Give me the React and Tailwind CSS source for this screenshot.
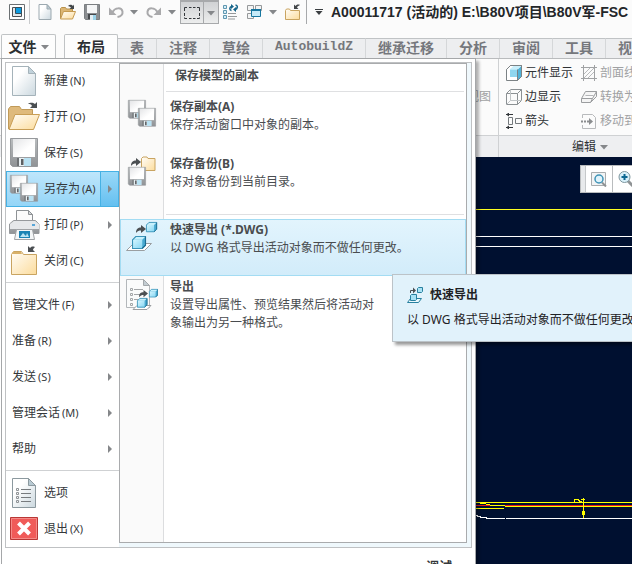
import React, { useState } from "react";

/* ---------- Small drawings ---------- */

const Gradients = () => (
  <svg width="0" height="0" className="absolute" aria-hidden="true">
    <defs>
      <linearGradient id="paper" x1="0" y1="0" x2="1" y2="1">
        <stop offset="0.3" stopColor="#ffffff" />
        <stop offset="1" stopColor="#cbd8df" />
      </linearGradient>
      <linearGradient id="folder" x1="0" y1="0" x2="1" y2="1">
        <stop offset="0.1" stopColor="#fffaf0" />
        <stop offset="1" stopColor="#fcdc9c" />
      </linearGradient>
      <linearGradient id="metal" x1="0" y1="0" x2="0" y2="1">
        <stop offset="0" stopColor="#b9bcbe" />
        <stop offset="1" stopColor="#909396" />
      </linearGradient>
      <linearGradient id="label" x1="0" y1="0" x2="1" y2="1">
        <stop offset="0" stopColor="#e4e5e7" />
        <stop offset="0.6" stopColor="#ffffff" />
      </linearGradient>
      <linearGradient id="cube" x1="0" y1="0" x2="1" y2="1">
        <stop offset="0" stopColor="#d6f6ff" />
        <stop offset="1" stopColor="#86d6f3" />
      </linearGradient>
    </defs>
  </svg>
);

const Icon = ({ size = 16, children }) => (
  <svg
    width={size}
    height={size}
    viewBox={`0 0 ${size} ${size}`}
    fill="none"
    className="shrink-0"
    aria-hidden="true"
  >
    {children}
  </svg>
);

const Floppy = () => (
  <>
    <path d="M0.5 0.5h27v28h-25l-2-2z" fill="url(#metal)" stroke="#96999c" />
    <path d="M3 1h22v18H3z" fill="url(#label)" />
    <path d="M7 20h14v8H7z" fill="#6e7174" />
    <path d="M9 20h12v8H9z" fill="#e9f0f3" />
    <path d="M14 20h7v8h-7z" fill="#b9e2f3" />
    <path d="M11 21h2.500v6H11z" fill="#5c6063" />
  </>
);

const Cube = () => (
  <>
    <path d="M0.500 3.500l3-3h9v8l-3 3h-9z" fill="#48a9d0" />
    <path d="M0.500 3.500h9v8h-9z" fill="url(#cube)" />
    <path d="M0.500 3.500l3-3h9l-3 3z" fill="#c6f0fc" />
    <path d="M0.500 3.500l3-3h9v8l-3 3h-9z" stroke="#3a93b8" />
    <path d="M12.500 0.500v8l-3 3" stroke="#1a6d92" />
  </>
);

const CurvedArrow = () => (
  <path d="M0 8c0-4 2-5.500 5-5.500V0l5 4-5 4V5.500C3 5.500 1.500 6 0 8z" fill="#4b4f52" />
);

const NewIcon = () => (
  <Icon>
    <path d="M1 0.5h8l4 4.500v10.500H1z" fill="url(#paper)" stroke="#9ca9b0" />
    <path d="M9 0.5v4.500h4z" fill="#bdccd4" stroke="#9ca9b0" />
  </Icon>
);

const OpenIcon = () => (
  <Icon>
    <path d="M0.500 14.500V4.500l1-1h4l1 1.500h6v3" fill="#dcb674" stroke="#b9924c" />
    <path d="M0.500 15l3-7.500h12l-3 7.500z" fill="url(#folder)" stroke="#c59a50" />
    <path d="M8 2c2-2 4-1 5 0l1-1.500V5h-4.500L11 3.500C10 2.500 9 2.500 8 2z" fill="#43474a" />
  </Icon>
);

const SaveIcon = () => (
  <Icon>
    <path d="M0.500 0.500h15v15h-14l-1-1z" fill="#8b8e91" stroke="#7a7e81" />
    <path d="M3 1h10v8H3z" fill="#f4f5f6" />
    <path d="M4 10h8v5H4z" fill="#45494c" />
    <path d="M6 11h6v5H6z" fill="#e3eef3" />
    <path d="M9 11h3v5H9z" fill="#9bd3ea" />
  </Icon>
);

const UndoIcon = () => (
  <Icon>
    <path d="M4.500 8C7 3.500 13.500 3 14.500 7.500c.5 3-1.500 5-5 5.500" stroke="#a9a9ab" strokeWidth="2" />
    <path d="M1 3.500V11h7.500z" fill="#a9a9ab" />
  </Icon>
);

const RedoIcon = () => (
  <Icon>
    <path d="M11.500 8C9 3.500 2.500 3 1.500 7.500c-.5 3 1.500 5 5 5.500" stroke="#a9a9ab" strokeWidth="2" />
    <path d="M15 3.500V11H7.500z" fill="#a9a9ab" />
  </Icon>
);

const AppIcon = () => (
  <Icon>
    <path d="M0.500 0.500h15v15H0.500z" fill="#fff" stroke="#6b7073" />
    <path d="M3.500 3.500h9v9h-9z" fill="#e3e7e9" stroke="#4c5155" />
    <path d="M6.500 3.500h6v6h-6z" fill="#0b9be0" stroke="#34505f" />
  </Icon>
);

const SelectIcon = () => (
  <Icon>
    <path
      d="M0.500 6V2.500H3M5 2.500h2.500M9 2.500h2.500M13 2.500h2.500V6M15.500 8v3M15.500 12.500v1H13M11.500 13.500H9M7.500 13.500H5M3 13.500H0.500v-1M0.500 11V8"
      stroke="#33373a"
    />
  </Icon>
);

const RegenIcon = () => (
  <Icon>
    <path d="M0.500 1.500h3v3h-3zM0.500 6.500h3v3h-3zM0.500 11.500h3v3h-3z" fill="#d7eef7" stroke="#5f97b0" />
    <path d="M5 9.500h8M5 12.500h9M5 15h7" stroke="#96999b" />
    <path d="M8.500 6.500C6 6 6.500 3 8.500 2.500" stroke="#15658a" strokeWidth="1.500" />
    <path d="M8 0l3 2.500L8 5z" fill="#15658a" />
    <path d="M12.500 1c3 .5 2 4-.5 4.500" stroke="#15658a" strokeWidth="1.500" />
    <path d="M13 3L10 5.500 13 8z" fill="#15658a" />
  </Icon>
);

const WindowsIcon = () => (
  <Icon>
    <path d="M0.500 1.500h6v5h-6zM8.500 1.500h6v5h-6zM0.500 9.500h6v5h-6z" fill="#f3f4f4" stroke="#96999b" />
    <path d="M4.500 5.500h9v7h-9z" fill="#c6eaf8" stroke="#17769f" />
    <path d="M4 5h10v2H4z" fill="#17769f" />
  </Icon>
);

const CloseFolderIcon = () => (
  <Icon>
    <path d="M0.500 15.500V6.500l1-1.500h3l1 1.500h9v9z" fill="url(#folder)" stroke="#c9a461" />
    <path d="M15 1c-2-1-4 0-4.500 1L9 0.500V5h4.500L12 3.500C12.500 2 14 2 15 1z" fill="#43474a" />
  </Icon>
);

const NewLarge = () => (
  <Icon size={32}>
    <path d="M4.500 1.500h16l7 7v22h-23z" fill="url(#paper)" stroke="#a5b3ba" />
    <path d="M20.500 1.500v7h7z" fill="#c1d2db" stroke="#a5b3ba" />
  </Icon>
);

const OpenLarge = () => (
  <Icon size={32}>
    <path d="M0.500 28V8l2-2.500h9l2 3h11V15" fill="#dfba7c" stroke="#c09a58" />
    <path d="M1 28.500L7 13.500h24.500l-6 15z" fill="url(#folder)" stroke="#c99e55" />
    <path d="M20 3c3-2 5-1 7 0l2-2v6h-7l2-2c-1-2-2-2-4-2z" fill="#4b4f52" />
  </Icon>
);

const SaveLarge = () => (
  <Icon size={32}>
    <g transform="translate(2 1)">
      <Floppy />
    </g>
  </Icon>
);

const SaveAsLarge = () => (
  <Icon size={32}>
    <g transform="translate(2 2) scale(0.640)">
      <Floppy />
    </g>
    <g transform="translate(12 10) scale(0.640)">
      <Floppy />
    </g>
  </Icon>
);

const PrintLarge = () => (
  <Icon size={32}>
    <path d="M8.500 13V1.500h12l4 4V13" fill="#fbfbfb" stroke="#8e9295" />
    <path d="M20.500 1.500v4h4z" fill="#d5d8da" stroke="#8e9295" />
    <path d="M1.500 24.500V15l4-3.500h22l3.500 3.500v9.500z" fill="url(#metal)" stroke="#96999c" />
    <path d="M2 15l4-3h21l4 3v5H2z" fill="#e6e8ea" />
    <path d="M24 15h3v2h-3z" fill="#58a6d8" />
    <path d="M8.500 20.500h16l2 10H6.500z" fill="#f4f6f7" stroke="#a0a3a6" />
    <path d="M11 22h11v7H11z" fill="#1b84b5" />
    <path d="M12 28l3-4 3 3 1-3 2 4z" fill="#b9e3f4" />
  </Icon>
);

const CloseLarge = () => (
  <Icon size={32}>
    <path d="M3.500 29.500V9.500l2-3h8l2 3h13v20z" fill="url(#folder)" stroke="#c9a461" />
    <path d="M5 7h8l1 2H4z" fill="#d9b169" />
    <path d="M27 2c-3-1-4 0-5 1l-2-2v6h7l-2-2c0-1 1-2 2-3z" fill="#4b4f52" />
  </Icon>
);

const OptionsLarge = () => (
  <Icon size={32}>
    <path d="M4.500 1.500h16l7 7v22h-23z" fill="url(#paper)" stroke="#8c999f" />
    <path d="M20.500 1.500v7h7z" fill="#b8cad3" stroke="#8c999f" />
    <path d="M13 12.500h10M13 16.500h10M13 20.500h10M13 24.500h10" stroke="#777b7e" />
    <path d="M8.500 11.500h2v2h-2zM8.500 15.500h2v2h-2zM8.500 19.500h2v2h-2zM8.500 23.500h2v2h-2z" stroke="#8f9396" />
  </Icon>
);

const ExitLarge = () => (
  <Icon size={32}>
    <path d="M2.500 4.500h27v22h-27z" fill="#f05b59" stroke="#b93735" />
    <path d="M3.500 5.500h25v20h-25z" stroke="#f58b88" />
    <path d="M10.500 10l11 11M21.500 10l-11 11" stroke="#fff" strokeWidth="4" />
  </Icon>
);

const BackupLarge = () => (
  <Icon size={32}>
    <path d="M15.500 15.500V3.500l1.500-1.500h4l1 1.500h7v12z" fill="url(#folder)" stroke="#c9a461" />
    <g transform="translate(5 3)">
      <CurvedArrow />
    </g>
    <g transform="translate(2 12) scale(0.640)">
      <Floppy />
    </g>
  </Icon>
);

const QuickExportLarge = () => (
  <Icon size={32}>
    <g transform="translate(10 4)">
      <CurvedArrow />
    </g>
    <g transform="translate(20 1) scale(0.850)">
      <Cube />
    </g>
    <path d="M0.500 29.500l7-7h18l-7 7z" fill="#fff" stroke="#9a9ea1" />
    <g transform="translate(6 15) scale(1.080)">
      <Cube />
    </g>
  </Icon>
);

const ExportLarge = () => (
  <Icon size={32}>
    <path d="M0.500 1.500h17l6 6v22h-23z" fill="#fafbfb" stroke="#b3b7ba" />
    <path d="M17.500 1.500v6h6z" fill="#c3cdd2" stroke="#a3a8ab" />
    <path d="M8 11.500h9M8 16.500h6M8 21.500h4" stroke="#a3a6a8" />
    <path d="M4.500 10.500h2v2h-2zM4.500 15.500h2v2h-2zM4.500 20.500h2v2h-2zM4.500 25.500h2v2h-2z" stroke="#a3a6a8" />
    <path d="M7 31.500l4-4h14l-4 4z" fill="#fff" stroke="#9a9ea1" />
    <g transform="translate(13 12) scale(0.900)">
      <CurvedArrow />
    </g>
    <g transform="translate(23 11) scale(0.700)">
      <Cube />
    </g>
    <g transform="translate(11 20) scale(0.800)">
      <Cube />
    </g>
  </Icon>
);

const QuickExportIcon = () => (
  <Icon>
    <path d="M3.500 6V3.500H7" stroke="#4b4f52" />
    <path d="M6 0.500l3 3-3 3z" fill="#4b4f52" />
    <path d="M0.500 15.500l3-4h11l-3 4z" fill="#eaf8fd" stroke="#28809f" />
    <path d="M10.500 1.500l1-1h4v4l-1 1h-4z" fill="#a9e2f5" stroke="#28809f" />
    <path d="M3.500 8.500l1-1h5v5l-1 1h-5z" fill="#a9e2f5" stroke="#28809f" />
  </Icon>
);

const ComponentIcon = () => (
  <Icon>
    <path d="M0.500 4.500l4-4h11v11l-4 4h-11z" fill="#fff" stroke="#7c8285" />
    <path d="M11.500 4.500l4-4v11l-4 4z" fill="#4fb2d8" />
    <path d="M3.500 4.500l4-3.500h8l-4 3.500z" fill="#c9effb" />
    <path d="M4 4.500h7.500v7.500H4z" fill="#8fd6ef" />
    <path d="M0.500 4.500l4-4h11v11l-4 4M11.500 4.500v11" stroke="#7c8285" />
  </Icon>
);

const EdgeIcon = () => (
  <Icon>
    <path d="M0.500 4.500l4-4h11v11l-4 4h-11zM0.500 4.500h11v11M11.500 4.500l4-4" stroke="#8b9093" />
    <path d="M4.500 0.500v11l-4 4M4.500 11.500h11" stroke="#c1c5c7" />
  </Icon>
);

const ArrowheadIcon = () => (
  <Icon>
    <path d="M0 1.500h7M0 14.500h7" stroke="#33373a" />
    <path d="M3 -0.500v4L0 1.500zM3 12.500v4l-3-2z" fill="#33373a" />
    <path d="M2.500 4.500h4v7h-4zM9.500 5.500h6v5h-6z" stroke="#74797c" />
  </Icon>
);

const HatchIcon = () => (
  <Icon>
    <path d="M2.500 0v16M13.500 0v16M0 2.500h16M0 13.500h16" stroke="#a0a2a4" />
    <path d="M3 9l6-6M3 13L13 3M7 13l6-6" stroke="#b8babc" />
  </Icon>
);

const ConvertIcon = () => (
  <Icon>
    <path d="M0.500 9.500l4-7h11l-4 7zM0.500 9.500v4h9l6-6v-5M11.500 9.500l-2 4" fill="#f4f4f4" stroke="#9b9d9f" />
    <path d="M4.500 6.500h8" stroke="#b3b5b7" />
  </Icon>
);

const MoveIcon = () => (
  <Icon>
    <path d="M1.500 5V1.500h10l3 3v11h-13V12" stroke="#b8babc" />
    <path d="M0 8.500h8" stroke="#8b8d8f" strokeWidth="2" strokeDasharray="2 1" />
    <path d="M8 5l4 3.500L8 12z" fill="#8b8d8f" />
  </Icon>
);

const ZoomWindowIcon = () => (
  <Icon>
    <path d="M0.500 1.500h14v13h-14z" fill="#f2f4f5" stroke="#a8acae" />
    <path d="M11 11.500l4 4" stroke="#8f9395" strokeWidth="2" />
    <circle cx="8" cy="8" r="4" fill="#e0f3fb" stroke="#3f93b6" strokeWidth="1.500" />
  </Icon>
);

const ZoomInIcon = () => (
  <Icon>
    <path d="M10 10l5 5" stroke="#8f9395" strokeWidth="3" />
    <circle cx="6.500" cy="6" r="5.500" fill="#d8f0fa" stroke="#7f979f" />
    <path d="M6.500 3v6M3.500 6h6" stroke="#0b6791" strokeWidth="2" />
  </Icon>
);

const DownCaret = ({ bar = false }) => (
  <svg width="8" height="6" viewBox="0 0 8 6" className="shrink-0" aria-hidden="true">
    {bar && <path d="M0 0h8v1H0z" fill="#3b3f42" />}
    <path d={bar ? "M0.500 2h7L4 6z" : "M0 1h8L4 5.500z"} fill={bar ? "#3b3f42" : "#85878a"} />
  </svg>
);

const RightCaret = () => (
  <svg width="4" height="8" viewBox="0 0 4 8" className="shrink-0" aria-hidden="true">
    <path d="M0 0l4 4-4 4z" fill="#85878a" />
  </svg>
);

/* ---------- Data ---------- */

const tabs = ["表", "注释", "草绘", "AutobuildZ", "继承迁移", "分析", "审阅", "工具", "视图"];

const fileActions = [
  { label: "新建", hotkey: "N", Glyph: NewLarge },
  { label: "打开", hotkey: "O", Glyph: OpenLarge },
  { label: "保存", hotkey: "S", Glyph: SaveLarge },
  { label: "另存为", hotkey: "A", Glyph: SaveAsLarge, submenu: true },
  { label: "打印", hotkey: "P", Glyph: PrintLarge, submenu: true },
  { label: "关闭", hotkey: "C", Glyph: CloseLarge },
];

const manageActions = [
  { label: "管理文件", hotkey: "F", submenu: true },
  { label: "准备", hotkey: "R", submenu: true },
  { label: "发送", hotkey: "S", submenu: true },
  { label: "管理会话", hotkey: "M", submenu: true },
  { label: "帮助", submenu: true },
];

const appActions = [
  { label: "选项", Glyph: OptionsLarge },
  { label: "退出", hotkey: "X", Glyph: ExitLarge },
];

const copyActions = [
  { title: "保存副本(A)", text: "保存活动窗口中对象的副本。", Glyph: SaveAsLarge },
  { title: "保存备份(B)", text: "将对象备份到当前目录。", Glyph: BackupLarge },
];

const exportActions = [
  {
    title: "快速导出 (*.DWG)",
    text: "以 DWG 格式导出活动对象而不做任何更改。",
    Glyph: QuickExportLarge,
    active: true,
  },
  {
    title: "导出",
    text: "设置导出属性、预览结果然后将活动对\n象输出为另一种格式。",
    Glyph: ExportLarge,
  },
];

/* ---------- Parts ---------- */

const ToolButton = ({ label, className = "", children }) => (
  <button type="button" aria-label={label} className={`shrink-0 ${className}`}>
    {children}
  </button>
);

const QuickAccess = () => (
  <header className="flex h-[34px] shrink-0 items-start whitespace-nowrap">
    <div className="flex h-6 items-center pl-[9px]">
      <ToolButton label="窗口"><AppIcon /></ToolButton>
      <div className="ml-1 h-full w-px bg-[#c9cbcd]" />
      <ToolButton label="新建" className="ml-2"><NewIcon /></ToolButton>
      <ToolButton label="打开" className="ml-1.5"><OpenIcon /></ToolButton>
      <ToolButton label="保存" className="ml-2"><SaveIcon /></ToolButton>
      <ToolButton label="撤消" className="ml-2"><UndoIcon /></ToolButton>
      <ToolButton label="撤消列表" className="ml-1.5"><DownCaret /></ToolButton>
      <ToolButton label="重做" className="ml-2"><RedoIcon /></ToolButton>
      <ToolButton label="重做列表" className="ml-1.5"><DownCaret /></ToolButton>
      <div className="ml-1 flex h-full border border-t-2 border-[#a7a9ab] bg-linear-to-b from-[#d0d2d4] to-[#eceded]">
        <ToolButton label="选择" className="border-r border-[#a7a9ab] px-[3px]"><SelectIcon /></ToolButton>
        <ToolButton label="选择列表" className="px-[3px]"><DownCaret /></ToolButton>
      </div>
      <ToolButton label="重新生成" className="ml-1"><RegenIcon /></ToolButton>
      <ToolButton label="切换窗口" className="ml-2"><WindowsIcon /></ToolButton>
      <ToolButton label="窗口列表" className="ml-1.5"><DownCaret /></ToolButton>
      <ToolButton label="关闭" className="ml-2"><CloseFolderIcon /></ToolButton>
      <div className="ml-[5px] h-full w-px bg-[#a7a9ab]" />
      <ToolButton label="自定义" className="ml-2"><DownCaret bar /></ToolButton>
      <h1 className="ml-2 text-sm font-bold text-[#232629]">
        A00011717 (活动的) E:\B80V项目\B80V军-FSC
      </h1>
    </div>
  </header>
);

const TabBar = () => (
  <nav className="flex h-6 shrink-0 items-end whitespace-nowrap pl-px text-sm font-bold">
    <button
      type="button"
      className="mr-2 flex h-6 w-[55px] shrink-0 items-center justify-center gap-1 rounded-t-xs border border-b-0 border-[#c0c3c5] bg-[#fdfdfd] text-[#2c2f32]"
    >
      文件
      <DownCaret />
    </button>
    <button
      type="button"
      className="flex h-6 shrink-0 items-center rounded-t-xs border border-b-0 border-[#c0c3c5] bg-[#fdfdfd] px-3 text-[#2c2f32]"
    >
      布局
    </button>
    {tabs.map((tab) => (
      <button
        key={tab}
        type="button"
        className={`flex h-5 shrink-0 items-center border-t border-r border-t-[#c0c3c5] border-r-[#d5d7d9] bg-[#edeef0] px-3 pb-0.5 text-[#75777c] ${
          tab === "AutobuildZ" ? "font-['Liberation_Mono',monospace] text-[13px]" : ""
        }`}
      >
        {tab}
      </button>
    ))}
    <div className="h-5 flex-1 border-t border-[#c0c3c5] bg-[#edeef0]" />
  </nav>
);

const Command = ({ Glyph, label, muted }) => (
  <button
    type="button"
    className={`flex h-6 items-center gap-[3px] ${muted ? "text-[#a0a1a3]" : "text-[#2f3235]"}`}
  >
    <Glyph />
    {label}
  </button>
);

const Ribbon = () => (
  <section className="flex h-[99px] shrink-0 border-t border-[#b9bbbd] text-xs whitespace-nowrap">
    <div className="flex w-[499px] shrink-0 flex-col border-r border-[#cfd1d3]">
      <button type="button" className="flex-1 pr-[7px] text-right text-[#a0a1a3]">
        视图
      </button>
      <div className="h-[22px] border-t border-[#cfd1d3] bg-[#eeeff1]" />
    </div>
    <div className="flex flex-1 flex-col">
      <div className="flex flex-1 gap-2 pt-0.5 pl-[7px]">
        <div className="flex flex-col">
          <Command Glyph={ComponentIcon} label="元件显示" />
          <Command Glyph={EdgeIcon} label="边显示" />
          <Command Glyph={ArrowheadIcon} label="箭头" />
        </div>
        <div className="flex flex-col">
          <Command Glyph={HatchIcon} label="剖面线" muted />
          <Command Glyph={ConvertIcon} label="转换为" muted />
          <Command Glyph={MoveIcon} label="移动到" muted />
        </div>
      </div>
      <button
        type="button"
        className="flex h-[22px] items-center gap-1 border-t border-[#cfd1d3] bg-[#eeeff1] pl-[73px] text-[#2f3235]"
      >
        编辑
        <DownCaret />
      </button>
    </div>
  </section>
);

const Canvas = () => (
  <main className="relative flex-1 overflow-hidden border-l border-white bg-[#001030]">
    <svg width="100%" height="100%" className="absolute inset-0" shapeRendering="crispEdges" aria-hidden="true">
      <g fill="none">
        <path d="M0 52.500H4000" stroke="#ffff20" />
        <path d="M0 79.500H4000M0 89.500H4000" stroke="#fff" />
        <path d="M475 348.500h15M504 348.500H4000" stroke="#e81818" />
        <path d="M0 345.500H4000M475 345.500l8 1 8 2h13M504 349.500H4000M475 351.500h28" stroke="#ffff00" />
        <path d="M475 358.500l6 2 9 1h14M505 361.500H4000" stroke="#fff" />
        <path d="M582.500 341v20M573.500 345v-2l2-1h2l1 3M578 344.500h3M580 342.500h4" stroke="#ffff00" />
        <path d="M581 354h3v4h-3z" fill="#ffff00" />
      </g>
    </svg>
    <div className="absolute top-2 left-[579px] flex h-7 border border-[#b9bcbe] bg-white">
      <div className="w-[5px] border-r border-[#c5c8ca] bg-[#e8eaec]" />
      <ToolButton label="重新调整" className="border-r border-[#b9bcbe] px-[5px]"><ZoomWindowIcon /></ToolButton>
      <ToolButton label="放大" className="px-[5px]"><ZoomInIcon /></ToolButton>
    </div>
  </main>
);

const MenuItem = ({ item, active, onSelect }) => {
  const { label, hotkey, Glyph, submenu } = item;
  return (
    <button
      type="button"
      onClick={onSelect}
      className={`flex h-9 w-full items-center text-left ${
        active ? "bg-linear-to-b from-[#bfe6fb] to-[#93d5f7] outline outline-1 -outline-offset-1 outline-[#46b1e4]" : ""
      }`}
    >
      <span className={`flex flex-1 items-center gap-1 ${Glyph ? "pl-0.5" : "pl-1.5"}`}>
        {Glyph && <Glyph />}
        <span>
          {label}
          {hotkey && <span className="ml-0.5 text-[11px]">({hotkey})</span>}
        </span>
      </span>
      {submenu && (
        <span
          className={`flex h-full w-[19px] items-center justify-center ${
            active ? "border-l border-[#46b1e4] bg-linear-to-b from-[#9bd9f8] to-[#62bff0]" : ""
          }`}
        >
          <RightCaret />
        </span>
      )}
    </button>
  );
};

const SubmenuItem = ({ title, text, Glyph, active }) => (
  <button
    type="button"
    className={`flex h-[57px] w-full items-start gap-3 border pl-[5px] pt-px text-left ${
      active ? "border-[#a3dcf3] bg-linear-to-b from-[#e2f4fd] to-[#d2ecfa]" : "border-transparent"
    }`}
  >
    <Glyph />
    <span className="whitespace-pre leading-[18px]">
      <span className="block font-bold">{title}</span>
      <span className="block">{text}</span>
    </span>
  </button>
);

const FileMenu = () => {
  const [open, setOpen] = useState("另存为");

  const renderItem = (item) => (
    <MenuItem
      key={item.label}
      item={item}
      active={open === item.label}
      onSelect={() => item.submenu && setOpen(item.label)}
    />
  );

  return (
    <div className="absolute top-[58px] left-px w-[475px] border border-[#a5a7a9] bg-white pt-[3px] pr-[3px] pl-[3px] text-xs text-[#35383b] shadow-[3px_3px_3px_rgba(0,0,0,0.3)]">
      <div className="flex border border-[#bfc1c3]">
        <div className="w-[113px] shrink-0">
          {fileActions.map(renderItem)}
          <hr className="mt-[3px] mb-1 border-[#cfd1d3]" />
          {manageActions.map(renderItem)}
          <hr className="mt-[3px] mb-1 border-[#cfd1d3]" />
          {appActions.map(renderItem)}
        </div>

        {/* Save a copy panel */}
        <div className="flex flex-1 bg-[#eff8fc] pr-1 pb-1">
          <div className="flex-1 border border-[#a9abad] bg-[linear-gradient(to_right,#fafafa_43px,#dcdddf_43px,#dcdddf_44px,#ffffff_44px)] text-[#494c4f]">
            <h2 className="pl-[55px] leading-6 font-bold">保存模型的副本</h2>
            <hr className="mt-[3px] mr-0.5 mb-1 ml-[46px] border-[#dfe0e2]" />
            {copyActions.map((item) => (
              <SubmenuItem key={item.title} {...item} />
            ))}
            <hr className="mt-1 mr-0.5 mb-1 ml-[46px] border-[#dfe0e2]" />
            {exportActions.map((item) => (
              <SubmenuItem key={item.title} {...item} />
            ))}
          </div>
        </div>
      </div>
      <p className="pt-2.5 pr-5 pb-3 text-right text-[13px] font-bold">调试</p>
    </div>
  );
};

const Tooltip = () => (
  <div
    role="tooltip"
    className="absolute top-[274px] left-[392px] border border-[#bcc3c8] bg-[#e1f2fb] px-3.5 py-3 text-xs whitespace-nowrap text-[#1f2225] shadow-[3px_3px_3px_rgba(0,0,0,0.4)]"
  >
    <p className="flex h-4 items-center gap-[7px] font-bold">
      <QuickExportIcon />
      快速导出
    </p>
    <p className="mt-2 leading-[18px]">以 DWG 格式导出活动对象而不做任何更改。</p>
  </div>
);

const App = () => (
  <div className="relative flex h-screen flex-col overflow-hidden bg-[#fbfbfb] font-['Liberation_Sans','Noto_Sans_CJK_SC',sans-serif]">
    <Gradients />
    <QuickAccess />
    <TabBar />
    <Ribbon />
    <Canvas />
    <div className="font-['Noto_Sans','Noto_Sans_CJK_SC',sans-serif]">
      <FileMenu />
      <Tooltip />
    </div>
  </div>
);

export default App;
